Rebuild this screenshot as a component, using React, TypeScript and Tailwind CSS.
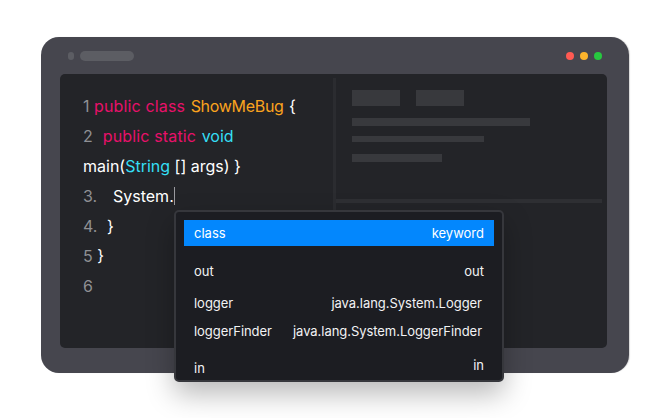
const Pink = ({ children }: { children: React.ReactNode }) => (
  <span className="text-[#e8106a] tracking-[0.15px]">{children}</span>
);
const Cyan = ({ children }: { children: React.ReactNode }) => (
  <span className="text-[#35dff5]">{children}</span>
);
const Num = ({ children }: { children: React.ReactNode }) => (
  <span className="text-[#8f9094]">{children}</span>
);

const suggestions = [
  { name: "out", type: "out", cls: "mt-[13px] h-[26px] pr-[10px]" },
  { name: "logger", type: "java.lang.System.Logger", cls: "mt-[6px] h-[26px] pr-[12px] tracking-[-0.03px]" },
  { name: "loggerFinder", type: "java.lang.System.LoggerFinder", cls: "mt-[2px] h-[26px] pr-[12px] tracking-[-0.05px]" },
];

export default function App() {
  return (
    <div className="w-[670px] h-[418px] bg-white overflow-hidden pt-[37px] pl-[41px] font-['Inter',sans-serif]">
      <div className="relative w-[588px] h-[336px] rounded-[18px] bg-[#46464e] shadow-[1px_0_1px_rgba(0,0,0,0.15)]">
        <div className="h-[37px] flex items-center justify-between pl-[27px] pr-[27px]">
          <div className="flex items-center gap-[6px] mt-[1px]">
            <div className="w-[6px] h-[8px] rounded-full bg-[#5c5d63]" />
            <div className="w-[54px] h-[10px] rounded-full bg-[#5c5d63]" />
          </div>
          <div className="flex gap-[6px] mt-[1px]">
            <div className="w-2 h-2 rounded-full bg-[#ff5a52]" />
            <div className="w-2 h-2 rounded-full bg-[#fdb42c]" />
            <div className="w-2 h-2 rounded-full bg-[#27c83f]" />
          </div>
        </div>

        <div className="ml-[19px] w-[547px] h-[274px] rounded-[5px] bg-[#232428] flex">
          <div className="w-[273px] pt-[17px] pl-[23px] text-[16px] leading-[30px] text-white">
            <div>
              <Num>1</Num> <Pink>public class</Pink>{" "}
              <span className="ml-[1px] tracking-[-0.3px] text-[#fba31e]">ShowMeBug</span>{" "}
              <span className="ml-[1px]">{"{"}</span>
            </div>
            <div>
              <Num>2</Num>&nbsp;<span className="ml-[1px]"> <Pink>public static</Pink> <span className="ml-[1px]"><Cyan>void</Cyan></span></span>
            </div>
            <div>main(<Cyan>String</Cyan> [] args) {"}"}</div>
            <div className="flex">
              <span className="w-[30px]"><Num>3.</Num></span>
              <span>System.</span>
              <span className="w-px h-[18px] mt-[6px] bg-[#9a9a9f]" />
            </div>
            <div className="flex">
              <span className="w-[24px]"><Num>4.</Num></span>
              <span>{"}"}</span>
            </div>
            <div><Num>5</Num> {"}"}</div>
            <div><Num>6</Num></div>
          </div>

          <div className="w-[3px] mt-[4px] bg-[#2b2c30]" />

          <div className="flex-1 flex flex-col">
            <div className="h-[125px] pt-[16px] pl-[16px]">
              <div className="flex gap-[16px]">
                <div className="w-[48px] h-[16px] bg-[#38393d]" />
                <div className="w-[48px] h-[16px] bg-[#38393d]" />
              </div>
              <div className="w-[178px] h-[8px] mt-[12px] bg-[#38393d]" />
              <div className="w-[132px] h-[6px] mt-[10px] bg-[#38393d]" />
              <div className="w-[90px] h-[8px] mt-[12px] bg-[#38393d]" />
            </div>
            <div className="h-[4px] w-[266px] bg-[#2e2f33]" />
          </div>
        </div>

        <div className="absolute left-[133px] top-[173px] w-[330px] h-[172px] rounded-[5px] bg-[#1c1d22] border-2 border-[#36373c] p-[8px] text-[13px] text-[#f2f2f4] shadow-[0_12px_28px_rgba(0,0,0,0.28)]">
          <div className="h-[26px] bg-[#0387fd] text-white flex items-center justify-between px-[10px] pt-[2px]">
            <span>class</span>
            <span>keyword</span>
          </div>
          {suggestions.map((s) => (
            <div key={s.name} className={`flex items-center justify-between pl-[10px] ${s.cls}`}>
              <span>{s.name}</span>
              <span>{s.type}</span>
            </div>
          ))}
          <div className="flex justify-between pl-[10px] pr-[10px] mt-[10px] h-[24px]">
            <span className="pt-[4px]">in</span>
            <span className="pt-[1px]">in</span>
          </div>
        </div>
      </div>
    </div>
  );
}
